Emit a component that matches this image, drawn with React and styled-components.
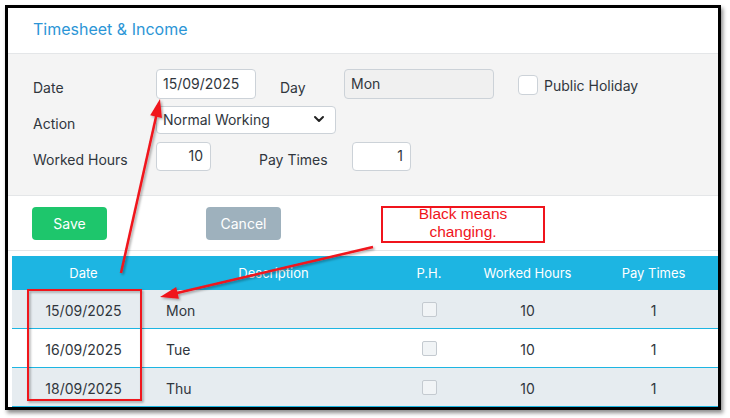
import React from 'react';
import styled, { createGlobalStyle } from 'styled-components';
import { FiChevronDown } from 'react-icons/fi';

const COLORS = {
  title: '#2b95d6',
  text: '#30363d',
  border: '#ccd2d8',
  formBg: '#f4f4f4',
  divider: '#e4e6e8',
  tableHead: '#1db5e2',
  stripe: '#e6ecf0',
  save: '#1ec66c',
  cancel: '#9eb1bd',
  red: '#f0141c',
};

const GlobalStyle = createGlobalStyle`
  * { box-sizing: border-box; }
  body {
    margin: 0;
    background: #ffffff;
    font-family: Inter, "Noto Sans", sans-serif;
    color: ${COLORS.text};
  }
`;

const Page = styled.div`
  position: relative;
  width: 730px;
  height: 418px;
  padding: 5px 0 0 5px;
`;

const Panel = styled.div`
  width: 716px;
  border: 3px solid #000;
  background: #fff;
  box-shadow: 2px 3px 4px rgba(0, 0, 0, 0.45);
`;

const Header = styled.div`
  height: 46px;
  padding: 0 25px 4px;
  display: flex;
  align-items: center;
  border-bottom: 1px solid ${COLORS.divider};
`;

const Title = styled.h1`
  margin: 0;
  font-size: 16px;
  font-weight: 400;
  color: ${COLORS.title};
`;

const Form = styled.div`
  height: 142px;
  background: ${COLORS.formBg};
  border-bottom: 1px solid ${COLORS.divider};
  padding: 15px 25px 0;
  display: flex;
  flex-direction: column;
`;

const FormRow = styled.div`
  display: flex;
  align-items: center;
  height: ${p => p.$h}px;
  margin-bottom: ${p => p.$gap || 0}px;
`;

const Label = styled.span`
  width: ${p => p.$w}px;
  margin-left: ${p => p.$ml || 0}px;
  padding-top: 6px;
  font-size: 14px;
  color: ${COLORS.text};
  white-space: nowrap;
`;

const Input = styled.div`
  width: ${p => p.$w}px;
  height: 100%;
  border: 1px solid ${COLORS.border};
  border-radius: 4px;
  background: ${p => (p.$disabled ? '#f0f0f0' : '#fff')};
  display: flex;
  align-items: center;
  justify-content: ${p => (p.$right ? 'flex-end' : 'flex-start')};
  padding: 0 7px 2px 6px;
  font-size: 14px;
  color: ${COLORS.text};
`;

const Select = styled(Input)`
  justify-content: space-between;
  padding: 0 8px 2px 6px;

  svg {
    font-size: 16px;
    stroke-width: 3;
    color: #222;
  }
`;

const CheckWrap = styled.label`
  display: flex;
  align-items: center;
  margin-left: 24px;
  font-size: 14px;
  padding-top: 2px;
`;

const Box = styled.span`
  display: inline-block;
  width: ${p => p.$size}px;
  height: ${p => p.$size}px;
  border: 1px solid ${p => p.$border || COLORS.border};
  border-radius: ${p => (p.$size > 16 ? 4 : 2)}px;
  background: ${p => p.$bg || '#fff'};
  margin-right: ${p => p.$mr || 0}px;
`;

const ButtonBar = styled.div`
  height: 55px;
  padding: 11px 24px 0;
  display: flex;
  gap: 99px;
  border-bottom: 1px solid ${COLORS.divider};
`;

const Button = styled.button`
  width: 75px;
  height: 33px;
  border: none;
  border-radius: 4px;
  background: ${p => (p.$variant === 'save' ? COLORS.save : COLORS.cancel)};
  color: #fff;
  font-family: inherit;
  font-size: 14px;
  padding-bottom: 2px;
`;

const TableWrap = styled.div`
  padding: 5px 0 0 4px;
`;

const Table = styled.div`
  display: grid;
  grid-template-columns: 143px 237px 74px 123px 129px;
`;

const HeadCell = styled.div`
  height: 34px;
  background: ${COLORS.tableHead};
  color: #fff;
  font-size: 13px;
  display: flex;
  align-items: center;
  justify-content: center;
  padding-bottom: 1px;
`;

const Cell = styled.div`
  height: 39px;
  background: ${p => (p.$stripe ? COLORS.stripe : '#fff')};
  border-bottom: 1px solid ${COLORS.tableHead};
  font-size: 14px;
  color: ${COLORS.text};
  display: flex;
  align-items: center;
  justify-content: ${p => (p.$left ? 'flex-start' : 'center')};
  padding: ${p => (p.$box ? 0 : 3)}px 0 0 ${p => (p.$left ? 11 : 0)}px;
`;

const Note = styled.div`
  position: absolute;
  left: 381px;
  top: 206px;
  width: 164px;
  height: 37px;
  border: 2px solid ${COLORS.red};
  background: #fff;
  color: ${COLORS.red};
  font-family: "Liberation Sans", Arial, sans-serif;
  font-size: 15.5px;
  line-height: 18px;
  text-align: center;
`;

const NoteText = styled.div`
  margin-top: -3px;
`;

const Overlay = styled.svg`
  position: absolute;
  left: 0;
  top: 0;
  pointer-events: none;
`;

const rows = [
  { date: '15/09/2025', day: 'Mon' },
  { date: '16/09/2025', day: 'Tue' },
  { date: '18/09/2025', day: 'Thu' },
];

const arrowHead = (x1, y1, x2, y2, len = 18, half = 6) => {
  const dx = x2 - x1;
  const dy = y2 - y1;
  const l = Math.hypot(dx, dy);
  const ux = dx / l;
  const uy = dy / l;
  const bx = x2 - ux * len;
  const by = y2 - uy * len;
  return `${x2},${y2} ${bx - uy * half},${by + ux * half} ${bx + uy * half},${by - ux * half}`;
};

const Arrow = ({ x1, y1, x2, y2 }) => (
  <g>
    <line x1={x1} y1={y1} x2={x2 - (x2 - x1) * 0.05} y2={y2 - (y2 - y1) * 0.05} stroke={COLORS.red} strokeWidth="2.5" />
    <polygon points={arrowHead(x1, y1, x2, y2)} fill={COLORS.red} />
  </g>
);

const App = () => (
  <>
    <GlobalStyle />
    <Page>
      <Panel>
        <Header>
          <Title>Timesheet &amp; Income</Title>
        </Header>
        <Form>
          <FormRow $h={30} $gap={7}>
            <Label $w={123}>Date</Label>
            <Input $w={100}>15/09/2025</Input>
            <Label $w={64} $ml={24}>Day</Label>
            <Input $w={150} $disabled>Mon</Input>
            <CheckWrap>
              <Box $size={20} $mr={6} />
              Public Holiday
            </CheckWrap>
          </FormRow>
          <FormRow $h={28} $gap={8}>
            <Label $w={123}>Action</Label>
            <Select $w={180}>
              Normal Working
              <FiChevronDown />
            </Select>
          </FormRow>
          <FormRow $h={29}>
            <Label $w={123}>Worked Hours</Label>
            <Input $w={55} $right>10</Input>
            <Label $w={93} $ml={48}>Pay Times</Label>
            <Input $w={59} $right>1</Input>
          </FormRow>
        </Form>
        <ButtonBar>
          <Button $variant="save">Save</Button>
          <Button $variant="cancel">Cancel</Button>
        </ButtonBar>
        <TableWrap>
          <Table>
            <HeadCell>Date</HeadCell>
            <HeadCell>Description</HeadCell>
            <HeadCell>P.H.</HeadCell>
            <HeadCell>Worked Hours</HeadCell>
            <HeadCell>Pay Times</HeadCell>
            {rows.map((r, i) => {
              const stripe = i % 2 === 0;
              return (
                <React.Fragment key={r.date}>
                  <Cell $stripe={stripe}>{r.date}</Cell>
                  <Cell $stripe={stripe} $left>{r.day}</Cell>
                  <Cell $stripe={stripe} $box>
                    <Box $size={15} $bg="#f1f4f6" $border="#c4cad0" />
                  </Cell>
                  <Cell $stripe={stripe}>10</Cell>
                  <Cell $stripe={stripe}>1</Cell>
                </React.Fragment>
              );
            })}
          </Table>
        </TableWrap>
      </Panel>

      <Overlay width="730" height="418" viewBox="0 0 730 418">
        <defs>
          <filter id="sh" x="-10%" y="-10%" width="130%" height="130%">
            <feDropShadow dx="1.5" dy="1.5" stdDeviation="1.2" floodColor="#000" floodOpacity="0.35" />
          </filter>
        </defs>
        <g filter="url(#sh)">
          <rect x="28" y="290" width="113" height="110" fill="none" stroke={COLORS.red} strokeWidth="2" />
          <Arrow x1={121} y1={273} x2={160} y2={99} />
          <Arrow x1={373} y1={247} x2={160} y2={297} />
        </g>
      </Overlay>
      <Note>
        <NoteText>
          Black means
          <br />
          changing.
        </NoteText>
      </Note>
    </Page>
  </>
);

export default App;
